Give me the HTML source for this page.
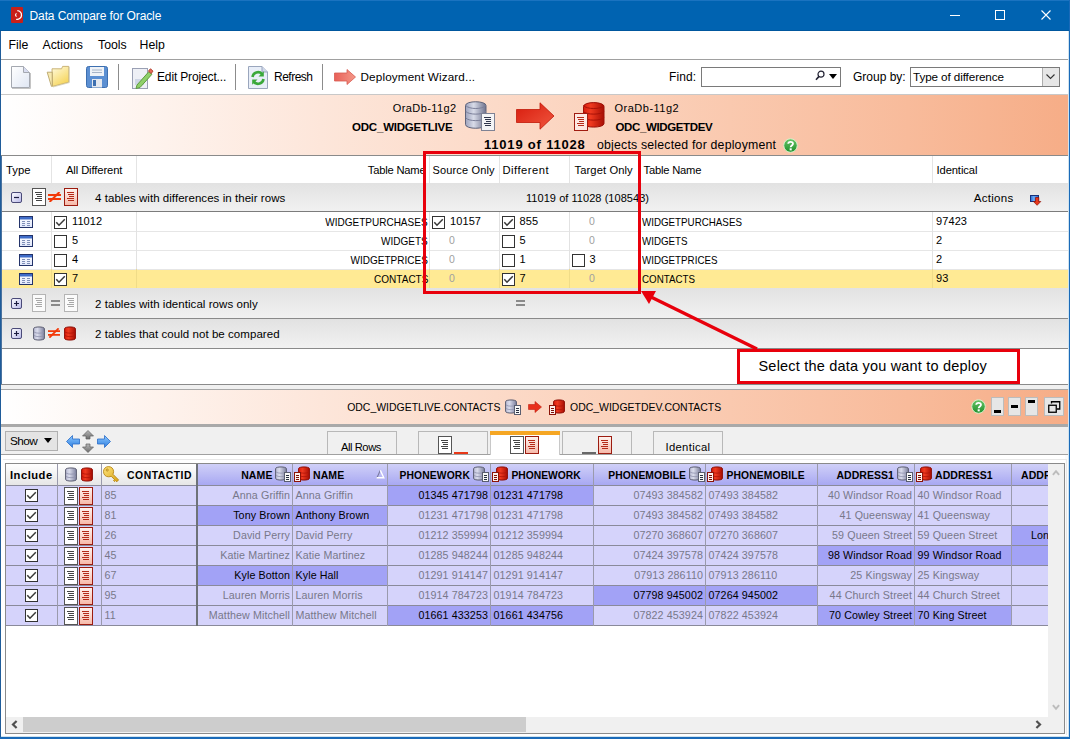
<!DOCTYPE html>
<html><head><meta charset="utf-8"><title>Data Compare for Oracle</title>
<style>
*{margin:0;padding:0;box-sizing:border-box}
html,body{width:1070px;height:739px;overflow:hidden;background:#fff}
body{position:relative;font-family:"Liberation Sans",sans-serif;color:#000}
.a{position:absolute}
.t{position:absolute;white-space:nowrap}
svg{overflow:visible}
</style></head><body>
<svg width="0" height="0" style="position:absolute">
<defs>
<linearGradient id="gDbG" x1="0" y1="0" x2="1" y2="0"><stop offset="0" stop-color="#b9bbd3"/><stop offset="0.35" stop-color="#d9dbeb"/><stop offset="1" stop-color="#7d809e"/></linearGradient>
<linearGradient id="gDbR" x1="0" y1="0" x2="1" y2="0"><stop offset="0" stop-color="#d81c0c"/><stop offset="0.35" stop-color="#f03a20"/><stop offset="1" stop-color="#a80e04"/></linearGradient>
<linearGradient id="gRdoc" x1="0" y1="0" x2="0" y2="1"><stop offset="0" stop-color="#fff4f0"/><stop offset="1" stop-color="#f6b8a8"/></linearGradient>
<linearGradient id="gBox" x1="0" y1="0" x2="1" y2="1"><stop offset="0" stop-color="#ffffff"/><stop offset="1" stop-color="#b8b8e8"/></linearGradient>
<linearGradient id="gTbl" x1="0" y1="0" x2="0" y2="1"><stop offset="0" stop-color="#ffffff"/><stop offset="1" stop-color="#dfe6fb"/></linearGradient>
<linearGradient id="gArrow" x1="0" y1="0" x2="1" y2="1"><stop offset="0" stop-color="#d81a0c"/><stop offset="1" stop-color="#f05840"/></linearGradient>
<linearGradient id="gHelp" x1="0" y1="0" x2="0" y2="1"><stop offset="0" stop-color="#6cc66a"/><stop offset="1" stop-color="#1d8f2a"/></linearGradient>

<symbol id="doc" viewBox="0 0 14 18"><rect x="0.5" y="0.5" width="13" height="17" fill="#fff" stroke="#555"/><path d="M3 4.5h7M4 6.5h6M5 8.5h5M3 10.5h7M4 12.5h6" stroke="#444" stroke-width="1"/></symbol>
<symbol id="docL" viewBox="0 0 14 18"><rect x="0.5" y="0.5" width="13" height="17" fill="#fbfbfb" stroke="#b4b4b4"/><path d="M3 4.5h7M4 6.5h6M5 8.5h5M3 10.5h7M4 12.5h6" stroke="#a8a8a8" stroke-width="1"/></symbol>
<symbol id="rdoc" viewBox="0 0 14 18"><rect x="0.5" y="0.5" width="13" height="17" fill="url(#gRdoc)" stroke="#9c1c10"/><path d="M3 4.5h7M4 6.5h6M5 8.5h5M3 10.5h7M4 12.5h6" stroke="#b52a18" stroke-width="1"/></symbol>
<symbol id="neq" viewBox="0 0 13 10"><path d="M0 3h13M0 7h13" stroke="#f23a0a" stroke-width="2"/><path d="M1.5 10L11.5 0" stroke="#f23a0a" stroke-width="2"/></symbol>
<symbol id="eq" viewBox="0 0 9 6"><path d="M0 1h9M0 5h9" stroke="#8a8a8a" stroke-width="2"/></symbol>
<symbol id="minus" viewBox="0 0 11 11"><rect x="0.5" y="0.5" width="10" height="10" rx="1.5" fill="url(#gBox)" stroke="#4a4a78"/><path d="M3 5.5h5" stroke="#1c1c40" stroke-width="1.2"/></symbol>
<symbol id="plus" viewBox="0 0 11 11"><rect x="0.5" y="0.5" width="10" height="10" rx="1.5" fill="url(#gBox)" stroke="#4a4a78"/><path d="M3 5.5h5M5.5 3v5" stroke="#1c1c40" stroke-width="1.2"/></symbol>
<symbol id="tbl" viewBox="0 0 14 12"><rect x="0.5" y="0.5" width="13" height="11" fill="url(#gTbl)" stroke="#23336a"/><rect x="1" y="1" width="12" height="2.5" fill="#3f6cc8"/><path d="M3 5.5h3M8 5.5h3M3 7.5h3M8 7.5h3M3 9.5h3M8 9.5h3" stroke="#7f8fb8" stroke-width="1"/></symbol>
<symbol id="chk" viewBox="0 0 13 13"><rect x="0.5" y="0.5" width="12" height="12" fill="#fff" stroke="#333"/><path d="M2.3 6.2L5 9.2L10.8 3.2" fill="none" stroke="#3a3a3a" stroke-width="1.5"/></symbol>
<symbol id="unchk" viewBox="0 0 13 13"><rect x="0.5" y="0.5" width="12" height="12" fill="#fff" stroke="#333"/></symbol>
<symbol id="dbG" viewBox="0 0 12 15"><path d="M0.6 2.6C0.6 0.4 11.4 0.4 11.4 2.6V12.4C11.4 14.6 0.6 14.6 0.6 12.4Z" fill="url(#gDbG)" stroke="#5a5c70" stroke-width="1"/><path d="M1 6c2 1.6 8 1.6 10 0M1 9.5c2 1.6 8 1.6 10 0" fill="none" stroke="#8f92ad" stroke-width="0.8"/></symbol>
<symbol id="dbR" viewBox="0 0 12 15"><path d="M0.6 2.6C0.6 0.4 11.4 0.4 11.4 2.6V12.4C11.4 14.6 0.6 14.6 0.6 12.4Z" fill="url(#gDbR)" stroke="#8c0c04" stroke-width="1"/><path d="M1 6c2 1.6 8 1.6 10 0M1 9.5c2 1.6 8 1.6 10 0" fill="none" stroke="#b01408" stroke-width="0.8"/></symbol>
<symbol id="dbGd" viewBox="0 0 16 16"><path d="M0.6 2.6C0.6 0.4 11.4 0.4 11.4 2.6V12.4C11.4 14.6 0.6 14.6 0.6 12.4Z" fill="url(#gDbG)" stroke="#5a5c70" stroke-width="1"/><path d="M1 6c2 1.6 8 1.6 10 0M1 9.5c2 1.6 8 1.6 10 0" fill="none" stroke="#8f92ad" stroke-width="0.8"/><rect x="9.5" y="6.5" width="6" height="9" fill="#f8f8f8" stroke="#5a5e70"/><path d="M11 9.5h3M11 11.5h3M11 13.5h3" stroke="#283040" stroke-width="1"/></symbol>
<symbol id="dbRd" viewBox="0 0 16 16"><path d="M4.6 2.6C4.6 0.4 15.4 0.4 15.4 2.6V12.4C15.4 14.6 4.6 14.6 4.6 12.4Z" fill="url(#gDbR)" stroke="#8c0c04" stroke-width="1"/><path d="M5 6c2 1.6 8 1.6 10 0M5 9.5c2 1.6 8 1.6 10 0" fill="none" stroke="#b01408" stroke-width="0.8"/><rect x="0.5" y="6.5" width="6" height="9" fill="#fdf0ec" stroke="#8c1408"/><path d="M2 9.5h3M2 11.5h3M2 13.5h3" stroke="#7a1008" stroke-width="1"/></symbol>
<symbol id="help" viewBox="0 0 16 16"><circle cx="8" cy="8" r="7.2" fill="url(#gHelp)" stroke="#d8f4d0" stroke-width="1"/><path d="M5.6 6.2C5.6 3.4 10.6 3.4 10.6 6.1C10.6 7.9 8.2 8 8.2 9.9" fill="none" stroke="#fff" stroke-width="2"/><rect x="7.1" y="11" width="2.2" height="2.2" fill="#fff"/></symbol>
</defs></svg>
<div class="a" style="left:0px;top:0px;width:1070px;height:31px;background:#0063b1"></div>
<div class="a" style="left:0px;top:0px;width:1070px;height:1px;background:#1a73c0"></div>
<div class="a" style="left:0px;top:30px;width:1070px;height:1px;background:#00579e"></div>
<svg class="a" style="left:11px;top:7px" width="12" height="16" viewBox="0 0 12 16"><rect x="0" y="0" width="12" height="16" rx="1" fill="#c8201a"/><path d="M6.3 3.6A4.4 4.4 0 1 1 5.2 12.3" fill="none" stroke="#fff" stroke-width="1.3"/><path d="M5.6 6.5A1.6 1.6 0 0 0 5.6 9.5" fill="none" stroke="#fff" stroke-width="1.1"/></svg>
<div class="t" style="top:10.00px;font-size:12px;line-height:12px;color:#fff;letter-spacing:-0.1px;left:29.5px;">Data Compare for Oracle</div>
<div class="a" style="left:950px;top:15px;width:10px;height:1px;background:#fff"></div>
<div class="a" style="left:995px;top:10px;width:10px;height:10px;border:1px solid #fff"></div>
<svg class="a" style="left:1041px;top:10px" width="10" height="10" viewBox="0 0 10 10"><path d="M0.5 0.5L9.5 9.5M9.5 0.5L0.5 9.5" stroke="#fff" stroke-width="1.1"/></svg>
<div class="t" style="top:39.00px;font-size:12.3px;line-height:12.3px;color:#000;left:8.5px;">File</div>
<div class="t" style="top:39.00px;font-size:12.3px;line-height:12.3px;color:#000;left:42.5px;">Actions</div>
<div class="t" style="top:39.00px;font-size:12.3px;line-height:12.3px;color:#000;left:98px;">Tools</div>
<div class="t" style="top:39.00px;font-size:12.3px;line-height:12.3px;color:#000;left:139.5px;">Help</div>
<div class="a" style="left:1px;top:59px;width:1067px;height:1px;background:#a0a0a0"></div>
<div class="a" style="left:1px;top:94px;width:1067px;height:1px;background:#c8c8c8"></div>
<svg class="a" style="left:11px;top:65px" width="20" height="24" viewBox="0 0 20 24"><defs><linearGradient id="gNew" x1="0" y1="0" x2="1" y2="1"><stop offset="0" stop-color="#ffffff"/><stop offset="1" stop-color="#dfe6f3"/></linearGradient></defs><path d="M0.5 1.5H12.5L18.5 7.5V22.5H0.5Z" fill="url(#gNew)" stroke="#a4a8b0"/><path d="M12.5 1.5V7.5H18.5" fill="#d8dcef" stroke="#a4a8b0"/><path d="M1 23.5H19.5V8" fill="none" stroke="#c4c4c4" stroke-width="1"/></svg>
<svg class="a" style="left:44px;top:62px" width="27" height="27" viewBox="0 0 27 27"><defs><linearGradient id="gFold" x1="0" y1="0" x2="0.6" y2="1"><stop offset="0" stop-color="#fffbe0"/><stop offset="1" stop-color="#f6d55a"/></linearGradient></defs><path d="M8 6.8H17.6L18.6 4.4H24.8V20.2L8.6 24.4Z" fill="url(#gFold)" stroke="#c4ad6c" stroke-width="0.9"/><path d="M3.2 10.2H8.2V24.3L7.4 24.3Z" fill="#f8eab0" stroke="#b8a468" stroke-width="0.9"/><path d="M25.3 5V20.6L9 25" fill="none" stroke="#d6d0b8" stroke-width="0.8"/></svg>
<svg class="a" style="left:86px;top:66px" width="22" height="22" viewBox="0 0 22 22"><rect x="0.5" y="0.5" width="21" height="21" rx="2" fill="#5b8fd2" stroke="#3d6fb0"/><rect x="4" y="1" width="14" height="9" fill="#eef2f7"/><path d="M6 4h10M6 6.5h10" stroke="#a6b4c8" stroke-width="1"/><rect x="6" y="13" width="10" height="8.5" fill="#e4e8ef"/><rect x="7" y="14" width="3" height="6" fill="#3d6fb0"/></svg>
<div class="a" style="left:118px;top:64px;width:1px;height:26px;background:#8c8c8c"></div>
<svg class="a" style="left:132px;top:66px" width="21" height="23" viewBox="0 0 21 23"><rect x="0.5" y="2.5" width="15" height="20" fill="#eef0f6" stroke="#9aa0b4"/><rect x="3" y="13" width="9" height="6" fill="#cfd6e6"/><path d="M5 19L17 5.5L20 8.2L8 21.5L4 22.5Z" fill="#8fd06a" stroke="#5e9b3e"/><path d="M16.5 5L18.5 2.8L21 5.2L19 7.6Z" fill="#e86a5a" stroke="#b04030"/></svg>
<div class="t" style="top:71.00px;font-size:12px;line-height:12px;color:#000;letter-spacing:-0.15px;left:157px;">Edit Project...</div>
<div class="a" style="left:235px;top:64px;width:1px;height:26px;background:#8c8c8c"></div>
<svg class="a" style="left:248px;top:66px" width="20" height="23" viewBox="0 0 20 23"><path d="M0.5 0.5H14L19.5 6V22.5H0.5Z" fill="#e8eef8" stroke="#9aa6bd"/><path d="M14 0.5V6H19.5" fill="#d0d8ea" stroke="#9aa6bd"/><path d="M4.5 11A5.5 5.5 0 0 1 14 8" fill="none" stroke="#3aa83a" stroke-width="2.6"/><path d="M15.8 5.2V10.5H10.5Z" fill="#3aa83a"/><path d="M15.5 13A5.5 5.5 0 0 1 6 16" fill="none" stroke="#3aa83a" stroke-width="2.6"/><path d="M4.2 18.8V13.5H9.5Z" fill="#3aa83a"/></svg>
<div class="t" style="top:71.00px;font-size:12px;line-height:12px;color:#000;letter-spacing:-0.5px;left:274px;">Refresh</div>
<div class="a" style="left:322px;top:64px;width:1px;height:26px;background:#8c8c8c"></div>
<svg class="a" style="left:334px;top:69px" width="22" height="16" viewBox="0 0 22 16"><defs><linearGradient id="gDep" x1="0" y1="0" x2="1" y2="0"><stop offset="0" stop-color="#e86058"/><stop offset="1" stop-color="#f49888"/></linearGradient></defs><path d="M0.5 4H13V0.5L21.5 8L13 15.5V12H0.5Z" fill="url(#gDep)" stroke="#d85a50" stroke-width="0.8"/></svg>
<div class="t" style="top:71.00px;font-size:11.7px;line-height:11.7px;color:#000;letter-spacing:0.15px;left:360.5px;">Deployment Wizard...</div>
<div class="t" style="top:71.00px;font-size:12px;line-height:12px;color:#000;letter-spacing:0.1px;left:669px;">Find:</div>
<div class="a" style="left:701px;top:67px;width:140px;height:20px;background:#fff;border:1px solid #7a7a7a"></div>
<svg class="a" style="left:815px;top:70px" width="10" height="11" viewBox="0 0 10 11"><circle cx="6" cy="4.2" r="3" fill="#fff" stroke="#223" stroke-width="1.2"/><path d="M4 6.4L1 9.8" stroke="#223" stroke-width="1.6"/></svg>
<svg class="a" style="left:829px;top:74px" width="8" height="5" viewBox="0 0 8 5"><path d="M0 0H8L4 5Z" fill="#000"/></svg>
<div class="t" style="top:71.00px;font-size:12px;line-height:12px;color:#000;left:853px;">Group by:</div>
<div class="a" style="left:910px;top:67px;width:150px;height:20px;background:#fff;border:1px solid #7a7a7a"></div>
<div class="a" style="left:1042px;top:68px;width:17px;height:18px;background:#e6e6e6;border-left:1px solid #adadad"></div>
<svg class="a" style="left:1046px;top:74px" width="9" height="6" viewBox="0 0 9 6"><path d="M0.5 0.5L4.5 4.5L8.5 0.5" fill="none" stroke="#333" stroke-width="1.1"/></svg>
<div class="t" style="top:71.00px;font-size:11.7px;line-height:11.7px;color:#000;letter-spacing:-0.1px;left:913px;">Type of difference</div>
<div class="a" style="left:1px;top:95px;width:1067px;height:60px;background:linear-gradient(90deg,#ffffff 0%,#fde6da 30%,#fbd0b9 60%,#f8bb9b 85%,#f6ad87 100%)"></div>
<div class="t" style="top:103.00px;font-size:11px;line-height:11px;color:#000;letter-spacing:0.4px;right:613.5px;">OraDb-11g2</div>
<div class="t" style="top:122.00px;font-size:11.5px;line-height:11.5px;color:#000;font-weight:700;letter-spacing:-0.22px;right:617.5px;">ODC_WIDGETLIVE</div>
<svg class="a" style="left:465px;top:101px" width="31" height="30" viewBox="0 0 31 30"><defs><linearGradient id="gBDb" x1="0" y1="0" x2="1" y2="0"><stop offset="0" stop-color="#9ea3bd"/><stop offset="0.4" stop-color="#d8dbe8"/><stop offset="1" stop-color="#6f738e"/></linearGradient></defs><path d="M0.5 4.5C0.5 -0.5 21 -0.5 21 4.5V23.5C21 28.5 0.5 28.5 0.5 23.5Z" fill="url(#gBDb)" stroke="#60647a"/><path d="M0.8 10.5C4 14 17.5 14 20.8 10.5M0.8 17C4 20.5 17.5 20.5 20.8 17M0.8 4.5C4 8.5 17.5 8.5 20.8 4.5" fill="none" stroke="#7c809a" stroke-width="1"/><rect x="16.5" y="12.5" width="13" height="17" fill="#f4f4f6" stroke="#7e8294"/><path d="M19 16.5h7M20 18.5h6M21 20.5h5M19 22.5h7M20 24.5h6" stroke="#30364c" stroke-width="1"/></svg>
<svg class="a" style="left:516px;top:102px" width="39" height="28" viewBox="0 0 39 28"><path d="M0.5 7.5H24V0.8L38 14L24 27.2V20.5H0.5Z" fill="url(#gArrow)" stroke="#c01808" stroke-width="0.8"/></svg>
<svg class="a" style="left:574px;top:101px" width="31" height="30" viewBox="0 0 31 30"><path d="M9.5 5.5C9.5 0.3 30 0.3 30 5.5V22.5C30 27.3 9.5 27.3 9.5 22.5Z" fill="url(#gDbR)" stroke="#9c1008"/><path d="M9.3 10.5C12.5 14 27 14 30.2 10.5M9.3 16.5C12.5 20 27 20 30.2 16.5M9.3 4.5C12.5 8.5 27 8.5 30.2 4.5" fill="none" stroke="#a81208" stroke-width="1"/><rect x="0.5" y="12.5" width="13" height="17" fill="#fde8e2" stroke="#a01c10"/><path d="M3 16.5h7M4 18.5h6M5 20.5h5M3 22.5h7M4 24.5h6" stroke="#b52a18" stroke-width="1"/></svg>
<div class="t" style="top:103.00px;font-size:11px;line-height:11px;color:#000;letter-spacing:0.5px;left:614.5px;">OraDb-11g2</div>
<div class="t" style="top:122.00px;font-size:11.5px;line-height:11.5px;color:#000;font-weight:700;letter-spacing:-0.37px;left:615.5px;">ODC_WIDGETDEV</div>
<div class="t" style="top:138.00px;font-size:13px;line-height:13px;color:#000;font-weight:700;letter-spacing:0.8px;left:484px;">11019 of 11028</div>
<div class="t" style="top:139.00px;font-size:12.3px;line-height:12.3px;color:#000;letter-spacing:0.2px;left:597px;">objects selected for deployment</div>
<svg class="a" style="left:783px;top:138px" width="15" height="15"><use href="#help"/></svg>
<div class="a" style="left:1px;top:155px;width:1067px;height:1px;background:#8a8a8a"></div>
<div class="a" style="left:1px;top:156px;width:1067px;height:27px;background:#fff"></div>
<div class="a" style="left:1px;top:156px;width:1px;height:229px;background:#4a73a0"></div>
<div class="a" style="left:51px;top:156px;width:1px;height:27px;background:#e4e4e4"></div>
<div class="a" style="left:136px;top:156px;width:1px;height:27px;background:#e4e4e4"></div>
<div class="a" style="left:429px;top:156px;width:1px;height:27px;background:#e4e4e4"></div>
<div class="a" style="left:499px;top:156px;width:1px;height:27px;background:#e4e4e4"></div>
<div class="a" style="left:569px;top:156px;width:1px;height:27px;background:#e4e4e4"></div>
<div class="a" style="left:639px;top:156px;width:1px;height:27px;background:#e4e4e4"></div>
<div class="a" style="left:932px;top:156px;width:1px;height:27px;background:#e4e4e4"></div>
<div class="t" style="top:165.00px;font-size:11.3px;line-height:11.3px;color:#000;left:6px;">Type</div>
<div class="t" style="top:165.00px;font-size:11.2px;line-height:11.2px;color:#000;letter-spacing:-0.1px;left:66px;">All Different</div>
<div class="t" style="top:165.00px;font-size:11.2px;line-height:11.2px;color:#000;letter-spacing:-0.2px;right:644.5px;">Table Name</div>
<div class="t" style="top:165.00px;font-size:11px;line-height:11px;color:#000;letter-spacing:0.15px;left:432.5px;">Source Only</div>
<div class="t" style="top:165.00px;font-size:11.2px;line-height:11.2px;color:#000;letter-spacing:0.5px;left:502.5px;">Different</div>
<div class="t" style="top:165.00px;font-size:11.2px;line-height:11.2px;color:#000;letter-spacing:0.1px;left:574.5px;">Target Only</div>
<div class="t" style="top:165.00px;font-size:11.2px;line-height:11.2px;color:#000;letter-spacing:-0.2px;left:643.5px;">Table Name</div>
<div class="t" style="top:165.00px;font-size:11.2px;line-height:11.2px;color:#000;letter-spacing:-0.1px;left:936.5px;">Identical</div>
<div class="a" style="left:2px;top:183px;width:1066px;height:28px;background:linear-gradient(180deg,#e2e2e2 0%,#f1f1f1 100%)"></div>
<div class="a" style="left:2px;top:211px;width:1066px;height:1px;background:#7c7c7c"></div>
<svg class="a" style="left:11px;top:192px" width="11" height="11"><use href="#minus"/></svg>
<svg class="a" style="left:32px;top:188px" width="14" height="18"><use href="#doc"/></svg>
<svg class="a" style="left:48px;top:192px" width="13" height="10"><use href="#neq"/></svg>
<svg class="a" style="left:64px;top:188px" width="14" height="18"><use href="#rdoc"/></svg>
<div class="t" style="top:193.00px;font-size:11.5px;line-height:11.5px;color:#000;letter-spacing:0.05px;left:95px;">4 tables with differences in their rows</div>
<div class="t" style="top:193.00px;font-size:11px;line-height:11px;color:#000;letter-spacing:0.05px;left:526px;">11019 of 11028 (108543)</div>
<div class="t" style="top:193.00px;font-size:11.5px;line-height:11.5px;color:#000;letter-spacing:0.3px;right:56.5px;">Actions</div>
<svg class="a" style="left:1030px;top:194px" width="12" height="12" viewBox="0 0 12 12"><defs><linearGradient id="gAct" x1="0" y1="0" x2="1" y2="0"><stop offset="0" stop-color="#2a68d0"/><stop offset="0.4" stop-color="#6aaaf4"/><stop offset="1" stop-color="#2a68d0"/></linearGradient></defs><rect x="0.5" y="1.5" width="8" height="6" fill="url(#gAct)" stroke="#16307a"/><path d="M5.5 3.5H8.8V7.5H10.8L7.1 11.3L3.4 7.5H5.5Z" fill="#e8381c" stroke="#8c1004" stroke-width="0.7"/></svg>
<div class="a" style="left:2px;top:212px;width:1066px;height:19px;background:#fff"></div>
<div class="a" style="left:2px;top:231px;width:1066px;height:1px;background:#e6e6e6"></div>
<div class="a" style="left:51px;top:212px;width:1px;height:19px;background:#e2e2e2"></div>
<div class="a" style="left:136px;top:212px;width:1px;height:19px;background:#e2e2e2"></div>
<div class="a" style="left:429px;top:212px;width:1px;height:19px;background:#e2e2e2"></div>
<div class="a" style="left:499px;top:212px;width:1px;height:19px;background:#e2e2e2"></div>
<div class="a" style="left:569px;top:212px;width:1px;height:19px;background:#e2e2e2"></div>
<div class="a" style="left:639px;top:212px;width:1px;height:19px;background:#e2e2e2"></div>
<div class="a" style="left:932px;top:212px;width:1px;height:19px;background:#e2e2e2"></div>
<svg class="a" style="left:19px;top:216px" width="14" height="12"><use href="#tbl"/></svg>
<svg class="a" style="left:54px;top:216px" width="13" height="13"><use href="#chk"/></svg>
<div class="t" style="top:216.00px;font-size:11px;line-height:11px;color:#000;letter-spacing:0.1px;left:72px;">11012</div>
<div class="t" style="top:217.00px;font-size:11.5px;line-height:11.5px;color:#000;transform:scaleX(0.87);transform-origin:right center;right:642px;">WIDGETPURCHASES</div>
<svg class="a" style="left:432px;top:216px" width="13" height="13"><use href="#chk"/></svg>
<div class="t" style="top:216.00px;font-size:11px;line-height:11px;color:#000;letter-spacing:0.1px;left:450px;">10157</div>
<svg class="a" style="left:502px;top:216px" width="13" height="13"><use href="#chk"/></svg>
<div class="t" style="top:216.00px;font-size:11px;line-height:11px;color:#000;letter-spacing:0.1px;left:519.5px;">855</div>
<div class="t" style="top:216.00px;font-size:10.5px;line-height:10.5px;color:#a0a0a0;left:589px;">0</div>
<div class="t" style="top:217.00px;font-size:11.5px;line-height:11.5px;color:#000;transform:scaleX(0.85);transform-origin:left center;left:641.5px;">WIDGETPURCHASES</div>
<div class="t" style="top:216.00px;font-size:11px;line-height:11px;color:#000;letter-spacing:0.1px;left:936px;">97423</div>
<div class="a" style="left:2px;top:232px;width:1066px;height:18px;background:#fff"></div>
<div class="a" style="left:2px;top:250px;width:1066px;height:1px;background:#e6e6e6"></div>
<div class="a" style="left:51px;top:231px;width:1px;height:19px;background:#e2e2e2"></div>
<div class="a" style="left:136px;top:231px;width:1px;height:19px;background:#e2e2e2"></div>
<div class="a" style="left:429px;top:231px;width:1px;height:19px;background:#e2e2e2"></div>
<div class="a" style="left:499px;top:231px;width:1px;height:19px;background:#e2e2e2"></div>
<div class="a" style="left:569px;top:231px;width:1px;height:19px;background:#e2e2e2"></div>
<div class="a" style="left:639px;top:231px;width:1px;height:19px;background:#e2e2e2"></div>
<div class="a" style="left:932px;top:231px;width:1px;height:19px;background:#e2e2e2"></div>
<svg class="a" style="left:19px;top:235px" width="14" height="12"><use href="#tbl"/></svg>
<svg class="a" style="left:54px;top:235px" width="13" height="13"><use href="#unchk"/></svg>
<div class="t" style="top:235.00px;font-size:11px;line-height:11px;color:#000;letter-spacing:0.1px;left:72px;">5</div>
<div class="t" style="top:236.00px;font-size:11.5px;line-height:11.5px;color:#000;transform:scaleX(0.87);transform-origin:right center;right:642px;">WIDGETS</div>
<div class="t" style="top:235.00px;font-size:10.5px;line-height:10.5px;color:#a0a0a0;left:449px;">0</div>
<svg class="a" style="left:502px;top:235px" width="13" height="13"><use href="#unchk"/></svg>
<div class="t" style="top:235.00px;font-size:11px;line-height:11px;color:#000;letter-spacing:0.1px;left:519.5px;">5</div>
<div class="t" style="top:235.00px;font-size:10.5px;line-height:10.5px;color:#a0a0a0;left:589px;">0</div>
<div class="t" style="top:236.00px;font-size:11.5px;line-height:11.5px;color:#000;transform:scaleX(0.85);transform-origin:left center;left:641.5px;">WIDGETS</div>
<div class="t" style="top:235.00px;font-size:11px;line-height:11px;color:#000;letter-spacing:0.1px;left:936px;">2</div>
<div class="a" style="left:2px;top:251px;width:1066px;height:18px;background:#fff"></div>
<div class="a" style="left:2px;top:269px;width:1066px;height:1px;background:#e6e6e6"></div>
<div class="a" style="left:51px;top:250px;width:1px;height:19px;background:#e2e2e2"></div>
<div class="a" style="left:136px;top:250px;width:1px;height:19px;background:#e2e2e2"></div>
<div class="a" style="left:429px;top:250px;width:1px;height:19px;background:#e2e2e2"></div>
<div class="a" style="left:499px;top:250px;width:1px;height:19px;background:#e2e2e2"></div>
<div class="a" style="left:569px;top:250px;width:1px;height:19px;background:#e2e2e2"></div>
<div class="a" style="left:639px;top:250px;width:1px;height:19px;background:#e2e2e2"></div>
<div class="a" style="left:932px;top:250px;width:1px;height:19px;background:#e2e2e2"></div>
<svg class="a" style="left:19px;top:254px" width="14" height="12"><use href="#tbl"/></svg>
<svg class="a" style="left:54px;top:254px" width="13" height="13"><use href="#unchk"/></svg>
<div class="t" style="top:254.00px;font-size:11px;line-height:11px;color:#000;letter-spacing:0.1px;left:72px;">4</div>
<div class="t" style="top:255.00px;font-size:11.5px;line-height:11.5px;color:#000;transform:scaleX(0.87);transform-origin:right center;right:642px;">WIDGETPRICES</div>
<div class="t" style="top:254.00px;font-size:10.5px;line-height:10.5px;color:#a0a0a0;left:449px;">0</div>
<svg class="a" style="left:502px;top:254px" width="13" height="13"><use href="#unchk"/></svg>
<div class="t" style="top:254.00px;font-size:11px;line-height:11px;color:#000;letter-spacing:0.1px;left:519.5px;">1</div>
<svg class="a" style="left:572px;top:254px" width="13" height="13"><use href="#unchk"/></svg>
<div class="t" style="top:254.00px;font-size:11px;line-height:11px;color:#000;letter-spacing:0.1px;left:589.5px;">3</div>
<div class="t" style="top:255.00px;font-size:11.5px;line-height:11.5px;color:#000;transform:scaleX(0.85);transform-origin:left center;left:641.5px;">WIDGETPRICES</div>
<div class="t" style="top:254.00px;font-size:11px;line-height:11px;color:#000;letter-spacing:0.1px;left:936px;">2</div>
<div class="a" style="left:2px;top:270px;width:1066px;height:18px;background:#ffea94"></div>
<div class="a" style="left:51px;top:269px;width:1px;height:19px;background:#f0dc88"></div>
<div class="a" style="left:136px;top:269px;width:1px;height:19px;background:#f0dc88"></div>
<div class="a" style="left:429px;top:269px;width:1px;height:19px;background:#f0dc88"></div>
<div class="a" style="left:499px;top:269px;width:1px;height:19px;background:#f0dc88"></div>
<div class="a" style="left:569px;top:269px;width:1px;height:19px;background:#f0dc88"></div>
<div class="a" style="left:639px;top:269px;width:1px;height:19px;background:#f0dc88"></div>
<div class="a" style="left:932px;top:269px;width:1px;height:19px;background:#f0dc88"></div>
<svg class="a" style="left:19px;top:273px" width="14" height="12"><use href="#tbl"/></svg>
<svg class="a" style="left:54px;top:273px" width="13" height="13"><use href="#chk"/></svg>
<div class="t" style="top:273.00px;font-size:11px;line-height:11px;color:#000;letter-spacing:0.1px;left:72px;">7</div>
<div class="t" style="top:274.00px;font-size:11.5px;line-height:11.5px;color:#000;transform:scaleX(0.87);transform-origin:right center;right:642px;">CONTACTS</div>
<div class="t" style="top:273.00px;font-size:10.5px;line-height:10.5px;color:#a0a0a0;left:449px;">0</div>
<svg class="a" style="left:502px;top:273px" width="13" height="13"><use href="#chk"/></svg>
<div class="t" style="top:273.00px;font-size:11px;line-height:11px;color:#000;letter-spacing:0.1px;left:519.5px;">7</div>
<div class="t" style="top:273.00px;font-size:10.5px;line-height:10.5px;color:#a0a0a0;left:589px;">0</div>
<div class="t" style="top:274.00px;font-size:11.5px;line-height:11.5px;color:#000;transform:scaleX(0.85);transform-origin:left center;left:641.5px;">CONTACTS</div>
<div class="t" style="top:273.00px;font-size:11px;line-height:11px;color:#000;letter-spacing:0.1px;left:936px;">93</div>
<div class="a" style="left:2px;top:288px;width:1066px;height:30px;background:linear-gradient(180deg,#e2e2e2 0%,#f1f1f1 100%)"></div>
<div class="a" style="left:2px;top:318px;width:1066px;height:1px;background:#8a8a8a"></div>
<svg class="a" style="left:11px;top:298px" width="11" height="11"><use href="#plus"/></svg>
<svg class="a" style="left:32px;top:294px" width="14" height="18"><use href="#docL"/></svg>
<svg class="a" style="left:51px;top:300px" width="9" height="6"><use href="#eq"/></svg>
<svg class="a" style="left:64px;top:294px" width="14" height="18"><use href="#docL"/></svg>
<div class="t" style="top:299.00px;font-size:11.5px;line-height:11.5px;color:#000;letter-spacing:0.05px;left:95px;">2 tables with identical rows only</div>
<svg class="a" style="left:515px;top:300px" width="11" height="6"><use href="#eq"/></svg>
<div class="a" style="left:2px;top:319px;width:1066px;height:29px;background:linear-gradient(180deg,#e2e2e2 0%,#f1f1f1 100%)"></div>
<div class="a" style="left:2px;top:348px;width:1066px;height:1px;background:#8a8a8a"></div>
<svg class="a" style="left:11px;top:328px" width="11" height="11"><use href="#plus"/></svg>
<svg class="a" style="left:33px;top:326px" width="12" height="15"><use href="#dbG"/></svg>
<svg class="a" style="left:48px;top:328px" width="12" height="10"><use href="#neq"/></svg>
<svg class="a" style="left:64px;top:326px" width="12" height="15"><use href="#dbR"/></svg>
<div class="t" style="top:329.00px;font-size:11.5px;line-height:11.5px;color:#000;letter-spacing:0.05px;left:95px;">2 tables that could not be compared</div>
<div class="a" style="left:2px;top:349px;width:1066px;height:35px;background:#fff"></div>
<div class="a" style="left:1px;top:384px;width:1067px;height:1px;background:#8a8a8a"></div>
<div class="a" style="left:1px;top:385px;width:1067px;height:4px;background:#f0f0f0"></div>
<div class="a" style="left:1px;top:389px;width:1067px;height:1px;background:#a8a8a8"></div>
<svg class="a" style="left:423px;top:151px" width="219" height="144" viewBox="0 0 219 144"><rect x="1.5" y="1.5" width="215" height="140" fill="none" stroke="#e8000c" stroke-width="3"/></svg>
<svg class="a" style="left:620px;top:280px" width="160" height="110" viewBox="0 0 160 110"><path d="M137 69L31 17" stroke="#e8000c" stroke-width="3.5"/><path d="M21 11H36L29 24Z" fill="#e8000c"/></svg>
<div class="a" style="left:737px;top:349px;width:283px;height:35px;background:#fff;border:3px solid #e8000c"></div>
<div class="t" style="top:359.00px;font-size:14.5px;line-height:14.5px;color:#000;letter-spacing:0.2px;left:758.5px;">Select the data you want to deploy</div>
<div class="a" style="left:1px;top:390px;width:1067px;height:34px;background:linear-gradient(90deg,#ffffff 0%,#fde6da 30%,#fbd0b9 60%,#f8bb9b 85%,#f6ad87 100%)"></div>
<div class="a" style="left:1px;top:424px;width:1067px;height:3px;background:#a9a9a9"></div>
<div class="t" style="top:402.00px;font-size:11.5px;line-height:11.5px;color:#000;transform:scaleX(0.91);transform-origin:right center;right:569.5px;">ODC_WIDGETLIVE.CONTACTS</div>
<svg class="a" style="left:505px;top:399px" width="16" height="16"><use href="#dbGd"/></svg>
<svg class="a" style="left:528px;top:401px" width="14" height="12" viewBox="0 0 14 12"><path d="M0.5 3.5H7V0.5L13.5 6L7 11.5V8.5H0.5Z" fill="#e8301c" stroke="#c02010" stroke-width="0.6"/></svg>
<svg class="a" style="left:549px;top:399px" width="16" height="16"><use href="#dbRd"/></svg>
<div class="t" style="top:402.00px;font-size:11.5px;line-height:11.5px;color:#000;transform:scaleX(0.91);transform-origin:left center;left:570px;">ODC_WIDGETDEV.CONTACTS</div>
<svg class="a" style="left:971px;top:399px" width="15" height="15"><use href="#help"/></svg>
<div class="a" style="left:991px;top:397px;width:13px;height:19px;background:#e6e6e6;border:1px solid #bcbcbc"></div>
<div class="a" style="left:994px;top:410px;width:7px;height:3px;background:#000"></div>
<div class="a" style="left:1008px;top:397px;width:13px;height:19px;background:#e6e6e6;border:1px solid #bcbcbc"></div>
<div class="a" style="left:1011px;top:405px;width:7px;height:3px;background:#000"></div>
<div class="a" style="left:1025px;top:397px;width:13px;height:19px;background:#e6e6e6;border:1px solid #bcbcbc"></div>
<div class="a" style="left:1028px;top:400px;width:7px;height:3px;background:#000"></div>
<div class="a" style="left:1044px;top:397px;width:20px;height:19px;background:#e6e6e6;border:1px solid #bcbcbc"></div>
<svg class="a" style="left:1048px;top:401px" width="13" height="12" viewBox="0 0 13 12"><rect x="0.75" y="4.25" width="7.5" height="7" fill="none" stroke="#000" stroke-width="1.3"/><path d="M3.5 2.5V0.75H11.75V8H9" fill="none" stroke="#000" stroke-width="1.3"/></svg>
<div class="a" style="left:1px;top:427px;width:1067px;height:27px;background:#f0f0f0"></div>
<div class="a" style="left:1px;top:454px;width:1067px;height:1px;background:#a0a0a0"></div>
<div class="a" style="left:1px;top:455px;width:1067px;height:282px;background:#fff"></div>
<div class="a" style="left:5px;top:431px;width:53px;height:20px;background:#e4e4e4;border:1px solid #b0b0b0"></div>
<div class="t" style="top:436.00px;font-size:11.8px;line-height:11.8px;color:#000;letter-spacing:-0.6px;left:10px;">Show</div>
<svg class="a" style="left:44px;top:438px" width="8" height="5" viewBox="0 0 8 5"><path d="M0 0H8L4 5Z" fill="#000"/></svg>
<svg class="a" style="left:66px;top:435px" width="14" height="13" viewBox="0 0 14 13"><defs><linearGradient id="gNav" x1="0" y1="0" x2="0" y2="1"><stop offset="0" stop-color="#8cc8ff"/><stop offset="1" stop-color="#2f7fe0"/></linearGradient></defs><path d="M0.5 6.5L6.5 0.5V4H13.5V9H6.5V12.5Z" fill="url(#gNav)" stroke="#2a6cc8" stroke-width="0.8"/></svg>
<svg class="a" style="left:97px;top:435px" width="14" height="13" viewBox="0 0 14 13"><path d="M13.5 6.5L7.5 0.5V4H0.5V9H7.5V12.5Z" fill="url(#gNav)" stroke="#2a6cc8" stroke-width="0.8"/></svg>
<svg class="a" style="left:82px;top:430px" width="12" height="23" viewBox="0 0 12 23"><defs><linearGradient id="gUD" x1="0" y1="0" x2="0" y2="1"><stop offset="0" stop-color="#b8b8b8"/><stop offset="1" stop-color="#6c6c6c"/></linearGradient></defs><path d="M6 0.5L11.5 6H8V9H4V6H0.5Z" fill="url(#gUD)" stroke="#606060" stroke-width="0.7"/><path d="M6 22.5L11.5 17H8V14H4V17H0.5Z" fill="url(#gUD)" stroke="#606060" stroke-width="0.7"/></svg>
<div class="a" style="left:327px;top:431px;width:70px;height:23px;background:#f0f0f0;border:1px solid #b8b8b8;border-bottom:none"></div>
<div class="t" style="top:442.00px;font-size:11.2px;line-height:11.2px;color:#000;letter-spacing:-0.45px;left:341px;">All Rows</div>
<div class="a" style="left:418px;top:431px;width:70px;height:23px;background:#f0f0f0;border:1px solid #b8b8b8;border-bottom:none"></div>
<svg class="a" style="left:438px;top:436px" width="14" height="18"><use href="#doc"/></svg>
<div class="a" style="left:454px;top:452px;width:14px;height:2px;background:#e83818"></div>
<div class="a" style="left:490px;top:431px;width:70px;height:24px;background:#fff;border-left:1px solid #c8c8c8;border-right:1px solid #c8c8c8"></div>
<div class="a" style="left:490px;top:431px;width:70px;height:4px;background:#f5a623"></div>
<svg class="a" style="left:510px;top:436px" width="14" height="18"><use href="#doc"/></svg>
<svg class="a" style="left:525px;top:436px" width="14" height="18"><use href="#rdoc"/></svg>
<div class="a" style="left:562px;top:431px;width:70px;height:23px;background:#f0f0f0;border:1px solid #b8b8b8;border-bottom:none"></div>
<div class="a" style="left:582px;top:452px;width:14px;height:2px;background:#686868"></div>
<svg class="a" style="left:598px;top:436px" width="14" height="18"><use href="#rdoc"/></svg>
<div class="a" style="left:653px;top:431px;width:70px;height:23px;background:#f0f0f0;border:1px solid #b8b8b8;border-bottom:none"></div>
<div class="t" style="top:442.00px;font-size:11.3px;line-height:11.3px;color:#000;letter-spacing:0.3px;left:665.5px;">Identical</div>
<div class="a" style="left:5px;top:463px;width:1060px;height:1px;background:#8a8a8a"></div>
<div class="a" style="left:5px;top:463px;width:1px;height:271px;background:#8a8a8a"></div>
<div class="a" style="left:6px;top:464px;width:190px;height:21px;background:linear-gradient(180deg,#ffffff 0%,#e6e6e6 100%)"></div>
<div class="a" style="left:198px;top:464px;width:850px;height:21px;background:linear-gradient(180deg,#d0d0f8 0%,#a8a8f2 100%)"></div>
<div class="a" style="left:6px;top:485px;width:1042px;height:1px;background:#8a8a9a"></div>
<div class="a" style="left:57px;top:464px;width:1px;height:162px;background:#9a9aac"></div>
<div class="a" style="left:101px;top:464px;width:1px;height:162px;background:#9a9aac"></div>
<div class="a" style="left:196px;top:464px;width:2px;height:162px;background:#6e7278"></div>
<div class="a" style="left:292px;top:464px;width:1px;height:162px;background:#9a9aac"></div>
<div class="a" style="left:387px;top:464px;width:1px;height:162px;background:#9a9aac"></div>
<div class="a" style="left:490px;top:464px;width:1px;height:162px;background:#9a9aac"></div>
<div class="a" style="left:593px;top:464px;width:1px;height:162px;background:#9a9aac"></div>
<div class="a" style="left:705px;top:464px;width:1px;height:162px;background:#9a9aac"></div>
<div class="a" style="left:817px;top:464px;width:1px;height:162px;background:#9a9aac"></div>
<div class="a" style="left:914px;top:464px;width:1px;height:162px;background:#9a9aac"></div>
<div class="a" style="left:1011px;top:464px;width:1px;height:162px;background:#9a9aac"></div>
<div class="t" style="top:470.00px;font-size:11.2px;line-height:11.2px;color:#000;font-weight:700;letter-spacing:0.5px;left:10px;">Include</div>
<svg class="a" style="left:65px;top:467px" width="12" height="15"><use href="#dbG"/></svg>
<svg class="a" style="left:81px;top:467px" width="12" height="15"><use href="#dbR"/></svg>
<svg class="a" style="left:103px;top:466px" width="17" height="17" viewBox="0 0 17 17"><defs><linearGradient id="gKey" x1="0" y1="0" x2="1" y2="1"><stop offset="0" stop-color="#ffe680"/><stop offset="1" stop-color="#d8a010"/></linearGradient></defs><path d="M5.5 0.6C8.6 0.6 10.6 2.8 10.6 5.6C10.6 6.6 10.3 7.5 9.9 8.2L15.6 13.9L13.8 15.8L12.6 14.6L11.6 15.6L10.5 14.5L11.4 13.5L8.2 10.2C7.4 10.6 6.5 10.8 5.5 10.8C2.6 10.8 0.5 8.6 0.5 5.6C0.5 2.8 2.6 0.6 5.5 0.6Z" fill="url(#gKey)" stroke="#b07c08" stroke-width="0.8"/><circle cx="4.2" cy="4" r="1.1" fill="none" stroke="#a87408" stroke-width="0.7"/></svg>
<div class="t" style="top:471.00px;font-size:10.4px;line-height:10.4px;color:#000;font-weight:700;letter-spacing:0.5px;right:878px;">CONTACTID</div>
<div class="t" style="top:470.00px;font-size:10.5px;line-height:10.5px;color:#000;font-weight:700;letter-spacing:0.1px;right:797.5px;">NAME</div>
<svg class="a" style="left:275px;top:466px" width="16" height="16"><use href="#dbGd"/></svg>
<svg class="a" style="left:294px;top:466px" width="16" height="16"><use href="#dbRd"/></svg>
<div class="t" style="top:470.00px;font-size:10.5px;line-height:10.5px;color:#000;font-weight:700;letter-spacing:0.1px;left:313px;">NAME</div>
<svg class="a" style="left:375px;top:469px" width="10" height="10" viewBox="0 0 10 10"><path d="M2 8.8L5.3 1.3" stroke="#7a7aa0" stroke-width="1.1" fill="none"/><path d="M5.3 1.3L8.8 8.8H1.6" stroke="#fff" stroke-width="1.4" fill="none"/></svg>
<div class="t" style="top:471.00px;font-size:10.3px;line-height:10.3px;color:#000;font-weight:700;letter-spacing:0.15px;right:600px;">PHONEWORK</div>
<svg class="a" style="left:473px;top:466px" width="16" height="16"><use href="#dbGd"/></svg>
<svg class="a" style="left:492px;top:466px" width="16" height="16"><use href="#dbRd"/></svg>
<div class="t" style="top:471.00px;font-size:10.3px;line-height:10.3px;color:#000;font-weight:700;left:511.5px;">PHONEWORK</div>
<div class="t" style="top:471.00px;font-size:10.3px;line-height:10.3px;color:#000;font-weight:700;letter-spacing:0.1px;right:384px;">PHONEMOBILE</div>
<svg class="a" style="left:689px;top:466px" width="16" height="16"><use href="#dbGd"/></svg>
<svg class="a" style="left:707px;top:466px" width="16" height="16"><use href="#dbRd"/></svg>
<div class="t" style="top:471.00px;font-size:10.3px;line-height:10.3px;color:#000;font-weight:700;letter-spacing:0.15px;left:726.5px;">PHONEMOBILE</div>
<div class="t" style="top:470.00px;font-size:10.5px;line-height:10.5px;color:#000;font-weight:700;letter-spacing:0.05px;right:176px;">ADDRESS1</div>
<svg class="a" style="left:897px;top:466px" width="16" height="16"><use href="#dbGd"/></svg>
<svg class="a" style="left:916px;top:466px" width="16" height="16"><use href="#dbRd"/></svg>
<div class="t" style="top:470.00px;font-size:10.5px;line-height:10.5px;color:#000;font-weight:700;letter-spacing:0.05px;left:935px;">ADDRESS1</div>
<div class="t" style="top:470.00px;font-size:10.5px;line-height:10.5px;color:#000;font-weight:700;letter-spacing:0.05px;left:1021px;">ADDRE</div>
<div class="a" style="left:6px;top:486px;width:190px;height:19px;background:#d5d3fb"></div>
<svg class="a" style="left:25px;top:489px" width="13" height="13"><use href="#chk"/></svg>
<svg class="a" style="left:64px;top:487px" width="14" height="18"><use href="#doc"/></svg>
<svg class="a" style="left:79px;top:487px" width="14" height="18"><use href="#rdoc"/></svg>
<div class="t" style="top:490.00px;font-size:10.7px;line-height:10.7px;color:#78788a;letter-spacing:0.1px;left:104.5px;">85</div>
<div class="a" style="left:198px;top:486px;width:189px;height:19px;background:#d5d3fb"></div>
<div class="t" style="top:490.00px;font-size:10.7px;line-height:10.7px;color:#78788a;letter-spacing:0.1px;right:780px;">Anna Griffin</div>
<div class="t" style="top:490.00px;font-size:10.7px;line-height:10.7px;color:#78788a;letter-spacing:0.1px;left:295.5px;">Anna Griffin</div>
<div class="a" style="left:388px;top:486px;width:205px;height:19px;background:#a2a2f6"></div>
<div class="t" style="top:490.00px;font-size:10.7px;line-height:10.7px;color:#000;letter-spacing:0.1px;right:582px;">01345 471798</div>
<div class="t" style="top:490.00px;font-size:10.7px;line-height:10.7px;color:#000;letter-spacing:0.1px;left:493.5px;">01231 471798</div>
<div class="a" style="left:594px;top:486px;width:223px;height:19px;background:#d5d3fb"></div>
<div class="t" style="top:490.00px;font-size:10.7px;line-height:10.7px;color:#78788a;letter-spacing:0.1px;right:367px;">07493 384582</div>
<div class="t" style="top:490.00px;font-size:10.7px;line-height:10.7px;color:#78788a;letter-spacing:0.1px;left:708.5px;">07493 384582</div>
<div class="a" style="left:818px;top:486px;width:193px;height:19px;background:#d5d3fb"></div>
<div class="t" style="top:490.00px;font-size:10.7px;line-height:10.7px;color:#78788a;letter-spacing:0.1px;right:158px;">40 Windsor Road</div>
<div class="t" style="top:490.00px;font-size:10.7px;line-height:10.7px;color:#78788a;letter-spacing:0.1px;left:917.5px;">40 Windsor Road</div>
<div class="a" style="left:1012px;top:486px;width:36px;height:19px;background:#d5d3fb"></div>
<div class="a" style="left:6px;top:505px;width:1042px;height:1px;background:#8a8a9a"></div>
<div class="a" style="left:6px;top:506px;width:190px;height:19px;background:#d5d3fb"></div>
<svg class="a" style="left:25px;top:509px" width="13" height="13"><use href="#chk"/></svg>
<svg class="a" style="left:64px;top:507px" width="14" height="18"><use href="#doc"/></svg>
<svg class="a" style="left:79px;top:507px" width="14" height="18"><use href="#rdoc"/></svg>
<div class="t" style="top:510.00px;font-size:10.7px;line-height:10.7px;color:#78788a;letter-spacing:0.1px;left:104.5px;">81</div>
<div class="a" style="left:198px;top:506px;width:189px;height:19px;background:#a2a2f6"></div>
<div class="t" style="top:510.00px;font-size:10.7px;line-height:10.7px;color:#000;letter-spacing:0.1px;right:780px;">Tony Brown</div>
<div class="t" style="top:510.00px;font-size:10.7px;line-height:10.7px;color:#000;letter-spacing:0.1px;left:295.5px;">Anthony Brown</div>
<div class="a" style="left:388px;top:506px;width:205px;height:19px;background:#d5d3fb"></div>
<div class="t" style="top:510.00px;font-size:10.7px;line-height:10.7px;color:#78788a;letter-spacing:0.1px;right:582px;">01231 471798</div>
<div class="t" style="top:510.00px;font-size:10.7px;line-height:10.7px;color:#78788a;letter-spacing:0.1px;left:493.5px;">01231 471798</div>
<div class="a" style="left:594px;top:506px;width:223px;height:19px;background:#d5d3fb"></div>
<div class="t" style="top:510.00px;font-size:10.7px;line-height:10.7px;color:#78788a;letter-spacing:0.1px;right:367px;">07493 384582</div>
<div class="t" style="top:510.00px;font-size:10.7px;line-height:10.7px;color:#78788a;letter-spacing:0.1px;left:708.5px;">07493 384582</div>
<div class="a" style="left:818px;top:506px;width:193px;height:19px;background:#d5d3fb"></div>
<div class="t" style="top:510.00px;font-size:10.7px;line-height:10.7px;color:#78788a;letter-spacing:0.1px;right:158px;">41 Queensway</div>
<div class="t" style="top:510.00px;font-size:10.7px;line-height:10.7px;color:#78788a;letter-spacing:0.1px;left:917.5px;">41 Queensway</div>
<div class="a" style="left:1012px;top:506px;width:36px;height:19px;background:#d5d3fb"></div>
<div class="a" style="left:6px;top:525px;width:1042px;height:1px;background:#8a8a9a"></div>
<div class="a" style="left:6px;top:526px;width:190px;height:19px;background:#d5d3fb"></div>
<svg class="a" style="left:25px;top:529px" width="13" height="13"><use href="#chk"/></svg>
<svg class="a" style="left:64px;top:527px" width="14" height="18"><use href="#doc"/></svg>
<svg class="a" style="left:79px;top:527px" width="14" height="18"><use href="#rdoc"/></svg>
<div class="t" style="top:530.00px;font-size:10.7px;line-height:10.7px;color:#78788a;letter-spacing:0.1px;left:104.5px;">26</div>
<div class="a" style="left:198px;top:526px;width:189px;height:19px;background:#d5d3fb"></div>
<div class="t" style="top:530.00px;font-size:10.7px;line-height:10.7px;color:#78788a;letter-spacing:0.1px;right:780px;">David Perry</div>
<div class="t" style="top:530.00px;font-size:10.7px;line-height:10.7px;color:#78788a;letter-spacing:0.1px;left:295.5px;">David Perry</div>
<div class="a" style="left:388px;top:526px;width:205px;height:19px;background:#d5d3fb"></div>
<div class="t" style="top:530.00px;font-size:10.7px;line-height:10.7px;color:#78788a;letter-spacing:0.1px;right:582px;">01212 359994</div>
<div class="t" style="top:530.00px;font-size:10.7px;line-height:10.7px;color:#78788a;letter-spacing:0.1px;left:493.5px;">01212 359994</div>
<div class="a" style="left:594px;top:526px;width:223px;height:19px;background:#d5d3fb"></div>
<div class="t" style="top:530.00px;font-size:10.7px;line-height:10.7px;color:#78788a;letter-spacing:0.1px;right:367px;">07270 368607</div>
<div class="t" style="top:530.00px;font-size:10.7px;line-height:10.7px;color:#78788a;letter-spacing:0.1px;left:708.5px;">07270 368607</div>
<div class="a" style="left:818px;top:526px;width:193px;height:19px;background:#d5d3fb"></div>
<div class="t" style="top:530.00px;font-size:10.7px;line-height:10.7px;color:#78788a;letter-spacing:0.1px;right:158px;">59 Queen Street</div>
<div class="t" style="top:530.00px;font-size:10.7px;line-height:10.7px;color:#78788a;letter-spacing:0.1px;left:917.5px;">59 Queen Street</div>
<div class="a" style="left:1012px;top:526px;width:36px;height:19px;background:#a2a2f6"></div>
<div class="t" style="top:530.00px;font-size:10.7px;line-height:10.7px;color:#000;left:1031px;">Lon</div>
<div class="a" style="left:6px;top:545px;width:1042px;height:1px;background:#8a8a9a"></div>
<div class="a" style="left:6px;top:546px;width:190px;height:19px;background:#d5d3fb"></div>
<svg class="a" style="left:25px;top:549px" width="13" height="13"><use href="#chk"/></svg>
<svg class="a" style="left:64px;top:547px" width="14" height="18"><use href="#doc"/></svg>
<svg class="a" style="left:79px;top:547px" width="14" height="18"><use href="#rdoc"/></svg>
<div class="t" style="top:550.00px;font-size:10.7px;line-height:10.7px;color:#78788a;letter-spacing:0.1px;left:104.5px;">45</div>
<div class="a" style="left:198px;top:546px;width:189px;height:19px;background:#d5d3fb"></div>
<div class="t" style="top:550.00px;font-size:10.7px;line-height:10.7px;color:#78788a;letter-spacing:0.1px;right:780px;">Katie Martinez</div>
<div class="t" style="top:550.00px;font-size:10.7px;line-height:10.7px;color:#78788a;letter-spacing:0.1px;left:295.5px;">Katie Martinez</div>
<div class="a" style="left:388px;top:546px;width:205px;height:19px;background:#d5d3fb"></div>
<div class="t" style="top:550.00px;font-size:10.7px;line-height:10.7px;color:#78788a;letter-spacing:0.1px;right:582px;">01285 948244</div>
<div class="t" style="top:550.00px;font-size:10.7px;line-height:10.7px;color:#78788a;letter-spacing:0.1px;left:493.5px;">01285 948244</div>
<div class="a" style="left:594px;top:546px;width:223px;height:19px;background:#d5d3fb"></div>
<div class="t" style="top:550.00px;font-size:10.7px;line-height:10.7px;color:#78788a;letter-spacing:0.1px;right:367px;">07424 397578</div>
<div class="t" style="top:550.00px;font-size:10.7px;line-height:10.7px;color:#78788a;letter-spacing:0.1px;left:708.5px;">07424 397578</div>
<div class="a" style="left:818px;top:546px;width:193px;height:19px;background:#a2a2f6"></div>
<div class="t" style="top:550.00px;font-size:10.7px;line-height:10.7px;color:#000;letter-spacing:0.1px;right:158px;">98 Windsor Road</div>
<div class="t" style="top:550.00px;font-size:10.7px;line-height:10.7px;color:#000;letter-spacing:0.1px;left:917.5px;">99 Windsor Road</div>
<div class="a" style="left:1012px;top:546px;width:36px;height:19px;background:#a2a2f6"></div>
<div class="a" style="left:6px;top:565px;width:1042px;height:1px;background:#8a8a9a"></div>
<div class="a" style="left:6px;top:566px;width:190px;height:19px;background:#d5d3fb"></div>
<svg class="a" style="left:25px;top:569px" width="13" height="13"><use href="#chk"/></svg>
<svg class="a" style="left:64px;top:567px" width="14" height="18"><use href="#doc"/></svg>
<svg class="a" style="left:79px;top:567px" width="14" height="18"><use href="#rdoc"/></svg>
<div class="t" style="top:570.00px;font-size:10.7px;line-height:10.7px;color:#78788a;letter-spacing:0.1px;left:104.5px;">67</div>
<div class="a" style="left:198px;top:566px;width:189px;height:19px;background:#a2a2f6"></div>
<div class="t" style="top:570.00px;font-size:10.7px;line-height:10.7px;color:#000;letter-spacing:0.1px;right:780px;">Kyle Botton</div>
<div class="t" style="top:570.00px;font-size:10.7px;line-height:10.7px;color:#000;letter-spacing:0.1px;left:295.5px;">Kyle Hall</div>
<div class="a" style="left:388px;top:566px;width:205px;height:19px;background:#d5d3fb"></div>
<div class="t" style="top:570.00px;font-size:10.7px;line-height:10.7px;color:#78788a;letter-spacing:0.1px;right:582px;">01291 914147</div>
<div class="t" style="top:570.00px;font-size:10.7px;line-height:10.7px;color:#78788a;letter-spacing:0.1px;left:493.5px;">01291 914147</div>
<div class="a" style="left:594px;top:566px;width:223px;height:19px;background:#d5d3fb"></div>
<div class="t" style="top:570.00px;font-size:10.7px;line-height:10.7px;color:#78788a;letter-spacing:0.1px;right:367px;">07913 286110</div>
<div class="t" style="top:570.00px;font-size:10.7px;line-height:10.7px;color:#78788a;letter-spacing:0.1px;left:708.5px;">07913 286110</div>
<div class="a" style="left:818px;top:566px;width:193px;height:19px;background:#d5d3fb"></div>
<div class="t" style="top:570.00px;font-size:10.7px;line-height:10.7px;color:#78788a;letter-spacing:0.1px;right:158px;">25 Kingsway</div>
<div class="t" style="top:570.00px;font-size:10.7px;line-height:10.7px;color:#78788a;letter-spacing:0.1px;left:917.5px;">25 Kingsway</div>
<div class="a" style="left:1012px;top:566px;width:36px;height:19px;background:#d5d3fb"></div>
<div class="a" style="left:6px;top:585px;width:1042px;height:1px;background:#8a8a9a"></div>
<div class="a" style="left:6px;top:586px;width:190px;height:19px;background:#d5d3fb"></div>
<svg class="a" style="left:25px;top:589px" width="13" height="13"><use href="#chk"/></svg>
<svg class="a" style="left:64px;top:587px" width="14" height="18"><use href="#doc"/></svg>
<svg class="a" style="left:79px;top:587px" width="14" height="18"><use href="#rdoc"/></svg>
<div class="t" style="top:590.00px;font-size:10.7px;line-height:10.7px;color:#78788a;letter-spacing:0.1px;left:104.5px;">95</div>
<div class="a" style="left:198px;top:586px;width:189px;height:19px;background:#d5d3fb"></div>
<div class="t" style="top:590.00px;font-size:10.7px;line-height:10.7px;color:#78788a;letter-spacing:0.1px;right:780px;">Lauren Morris</div>
<div class="t" style="top:590.00px;font-size:10.7px;line-height:10.7px;color:#78788a;letter-spacing:0.1px;left:295.5px;">Lauren Morris</div>
<div class="a" style="left:388px;top:586px;width:205px;height:19px;background:#d5d3fb"></div>
<div class="t" style="top:590.00px;font-size:10.7px;line-height:10.7px;color:#78788a;letter-spacing:0.1px;right:582px;">01914 784723</div>
<div class="t" style="top:590.00px;font-size:10.7px;line-height:10.7px;color:#78788a;letter-spacing:0.1px;left:493.5px;">01914 784723</div>
<div class="a" style="left:594px;top:586px;width:223px;height:19px;background:#a2a2f6"></div>
<div class="t" style="top:590.00px;font-size:10.7px;line-height:10.7px;color:#000;letter-spacing:0.1px;right:367px;">07798 945002</div>
<div class="t" style="top:590.00px;font-size:10.7px;line-height:10.7px;color:#000;letter-spacing:0.1px;left:708.5px;">07264 945002</div>
<div class="a" style="left:818px;top:586px;width:193px;height:19px;background:#d5d3fb"></div>
<div class="t" style="top:590.00px;font-size:10.7px;line-height:10.7px;color:#78788a;letter-spacing:0.1px;right:158px;">44 Church Street</div>
<div class="t" style="top:590.00px;font-size:10.7px;line-height:10.7px;color:#78788a;letter-spacing:0.1px;left:917.5px;">44 Church Street</div>
<div class="a" style="left:1012px;top:586px;width:36px;height:19px;background:#d5d3fb"></div>
<div class="a" style="left:6px;top:605px;width:1042px;height:1px;background:#8a8a9a"></div>
<div class="a" style="left:6px;top:606px;width:190px;height:19px;background:#d5d3fb"></div>
<svg class="a" style="left:25px;top:609px" width="13" height="13"><use href="#chk"/></svg>
<svg class="a" style="left:64px;top:607px" width="14" height="18"><use href="#doc"/></svg>
<svg class="a" style="left:79px;top:607px" width="14" height="18"><use href="#rdoc"/></svg>
<div class="t" style="top:610.00px;font-size:10.7px;line-height:10.7px;color:#78788a;letter-spacing:0.1px;left:104.5px;">11</div>
<div class="a" style="left:198px;top:606px;width:189px;height:19px;background:#d5d3fb"></div>
<div class="t" style="top:610.00px;font-size:10.7px;line-height:10.7px;color:#78788a;letter-spacing:0.1px;right:780px;">Matthew Mitchell</div>
<div class="t" style="top:610.00px;font-size:10.7px;line-height:10.7px;color:#78788a;letter-spacing:0.1px;left:295.5px;">Matthew Mitchell</div>
<div class="a" style="left:388px;top:606px;width:205px;height:19px;background:#a2a2f6"></div>
<div class="t" style="top:610.00px;font-size:10.7px;line-height:10.7px;color:#000;letter-spacing:0.1px;right:582px;">01661 433253</div>
<div class="t" style="top:610.00px;font-size:10.7px;line-height:10.7px;color:#000;letter-spacing:0.1px;left:493.5px;">01661 434756</div>
<div class="a" style="left:594px;top:606px;width:223px;height:19px;background:#d5d3fb"></div>
<div class="t" style="top:610.00px;font-size:10.7px;line-height:10.7px;color:#78788a;letter-spacing:0.1px;right:367px;">07822 453924</div>
<div class="t" style="top:610.00px;font-size:10.7px;line-height:10.7px;color:#78788a;letter-spacing:0.1px;left:708.5px;">07822 453924</div>
<div class="a" style="left:818px;top:606px;width:193px;height:19px;background:#a2a2f6"></div>
<div class="t" style="top:610.00px;font-size:10.7px;line-height:10.7px;color:#000;letter-spacing:0.1px;right:158px;">70 Cowley Street</div>
<div class="t" style="top:610.00px;font-size:10.7px;line-height:10.7px;color:#000;letter-spacing:0.1px;left:917.5px;">70 King Street</div>
<div class="a" style="left:1012px;top:606px;width:36px;height:19px;background:#d5d3fb"></div>
<div class="a" style="left:6px;top:625px;width:1042px;height:1px;background:#8a8a9a"></div>
<div class="a" style="left:57px;top:464px;width:1px;height:162px;background:#9a9aac"></div>
<div class="a" style="left:101px;top:464px;width:1px;height:162px;background:#9a9aac"></div>
<div class="a" style="left:196px;top:464px;width:2px;height:162px;background:#6e7278"></div>
<div class="a" style="left:292px;top:464px;width:1px;height:162px;background:#9a9aac"></div>
<div class="a" style="left:387px;top:464px;width:1px;height:162px;background:#9a9aac"></div>
<div class="a" style="left:490px;top:464px;width:1px;height:162px;background:#9a9aac"></div>
<div class="a" style="left:593px;top:464px;width:1px;height:162px;background:#9a9aac"></div>
<div class="a" style="left:705px;top:464px;width:1px;height:162px;background:#9a9aac"></div>
<div class="a" style="left:817px;top:464px;width:1px;height:162px;background:#9a9aac"></div>
<div class="a" style="left:914px;top:464px;width:1px;height:162px;background:#9a9aac"></div>
<div class="a" style="left:1011px;top:464px;width:1px;height:162px;background:#9a9aac"></div>
<div class="a" style="left:1048px;top:464px;width:16px;height:270px;background:#f0f0f0"></div>
<div class="a" style="left:1064px;top:463px;width:1px;height:271px;background:#8a8a8a"></div>
<div class="a" style="left:5px;top:733px;width:1060px;height:1px;background:#8a8a8a"></div>
<div class="a" style="left:1065px;top:455px;width:3px;height:282px;background:#fbfbfb"></div>
<svg class="a" style="left:1052px;top:469px" width="8" height="7" viewBox="0 0 8 7"><path d="M0.9 5.8L4 2.2L7.1 5.8" fill="none" stroke="#bdbdbd" stroke-width="2"/></svg>
<svg class="a" style="left:1052px;top:704px" width="8" height="7" viewBox="0 0 8 7"><path d="M0.9 1.2L4 4.8L7.1 1.2" fill="none" stroke="#bdbdbd" stroke-width="2"/></svg>
<div class="a" style="left:6px;top:717px;width:1042px;height:16px;background:#f0f0f0"></div>
<div class="a" style="left:23px;top:717px;width:503px;height:15px;background:#cdcdcd"></div>
<svg class="a" style="left:11px;top:720px" width="7" height="9" viewBox="0 0 7 9"><path d="M5.6 1L2 4.5L5.6 8" fill="none" stroke="#505050" stroke-width="2.2"/></svg>
<svg class="a" style="left:1035px;top:720px" width="8" height="9" viewBox="0 0 8 9"><path d="M1.4 1L5 4.5L1.4 8" fill="none" stroke="#505050" stroke-width="2.2"/></svg>
<div class="a" style="left:1px;top:734px;width:1067px;height:3px;background:#fff"></div>
<div class="a" style="left:3px;top:459px;width:1063px;height:1px;background:#e8e8e8"></div>
<div class="a" style="left:1066px;top:459px;width:1px;height:276px;background:#e8e8e8"></div>
<div class="a" style="left:0px;top:31px;width:1px;height:708px;background:#1f5c9a"></div>
<div class="a" style="left:1068px;top:31px;width:1px;height:706px;background:#cfe3f0"></div>
<div class="a" style="left:1069px;top:0px;width:1px;height:739px;background:#1a6ab8"></div>
<div class="a" style="left:1px;top:736px;width:1068px;height:1px;background:#cfe3f0"></div>
<div class="a" style="left:0px;top:737px;width:1070px;height:2px;background:#1a6ab8"></div>
</body></html>
